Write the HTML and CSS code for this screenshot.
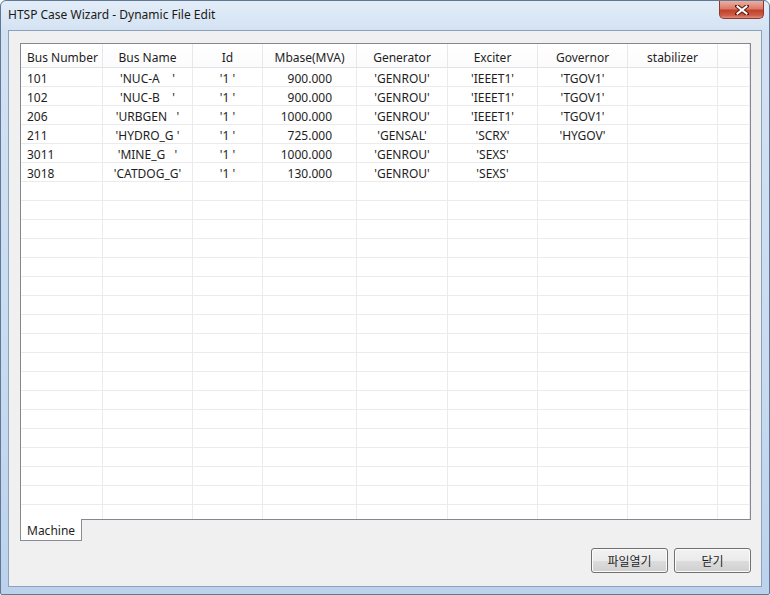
FILE: index.html
```html
<!DOCTYPE html>
<html lang="ko">
<head>
<meta charset="utf-8">
<title>HTSP Case Wizard - Dynamic File Edit</title>
<link rel="stylesheet" href="styles.css">
</head>
<body>
<div class="window">
  <div class="titlebar">
    <span class="title">HTSP Case Wizard - Dynamic File Edit</span>
    <div class="close-btn"><svg width="14" height="10" viewBox="0 0 14 10"><path d="M2 1 L12 9 M12 1 L2 9" stroke="#5a1a10" stroke-width="4" stroke-linecap="square"/><path d="M2.5 1.5 L11.5 8.5 M11.5 1.5 L2.5 8.5" stroke="#ffffff" stroke-width="2" stroke-linecap="square"/></svg></div>
  </div>
  <div class="client">
    <div class="gridbox">
      <div class="row header">
        <div class="c left">Bus Number</div>
        <div class="c">Bus Name</div>
        <div class="c">Id</div>
        <div class="c">Mbase(MVA)</div>
        <div class="c">Generator</div>
        <div class="c">Exciter</div>
        <div class="c">Governor</div>
        <div class="c">stabilizer</div>
        <div class="c"></div>
      </div>
      <div class="row"><div class="c left">101</div><div class="c">'NUC-A    '</div><div class="c">'1 '</div><div class="c right">900.000</div><div class="c">'GENROU'</div><div class="c">'IEEET1'</div><div class="c">'TGOV1'</div><div class="c"></div><div class="c"></div></div>
      <div class="row"><div class="c left">102</div><div class="c">'NUC-B    '</div><div class="c">'1 '</div><div class="c right">900.000</div><div class="c">'GENROU'</div><div class="c">'IEEET1'</div><div class="c">'TGOV1'</div><div class="c"></div><div class="c"></div></div>
      <div class="row"><div class="c left">206</div><div class="c">'URBGEN   '</div><div class="c">'1 '</div><div class="c right">1000.000</div><div class="c">'GENROU'</div><div class="c">'IEEET1'</div><div class="c">'TGOV1'</div><div class="c"></div><div class="c"></div></div>
      <div class="row"><div class="c left">211</div><div class="c">'HYDRO_G '</div><div class="c">'1 '</div><div class="c right">725.000</div><div class="c">'GENSAL'</div><div class="c">'SCRX'</div><div class="c">'HYGOV'</div><div class="c"></div><div class="c"></div></div>
      <div class="row"><div class="c left">3011</div><div class="c">'MINE_G   '</div><div class="c">'1 '</div><div class="c right">1000.000</div><div class="c">'GENROU'</div><div class="c">'SEXS'</div><div class="c"></div><div class="c"></div><div class="c"></div></div>
      <div class="row"><div class="c left">3018</div><div class="c">'CATDOG_G'</div><div class="c">'1 '</div><div class="c right">130.000</div><div class="c">'GENROU'</div><div class="c">'SEXS'</div><div class="c"></div><div class="c"></div><div class="c"></div></div>
      <div class="row"><div class="c"></div><div class="c"></div><div class="c"></div><div class="c"></div><div class="c"></div><div class="c"></div><div class="c"></div><div class="c"></div><div class="c"></div></div>
      <div class="row"><div class="c"></div><div class="c"></div><div class="c"></div><div class="c"></div><div class="c"></div><div class="c"></div><div class="c"></div><div class="c"></div><div class="c"></div></div>
      <div class="row"><div class="c"></div><div class="c"></div><div class="c"></div><div class="c"></div><div class="c"></div><div class="c"></div><div class="c"></div><div class="c"></div><div class="c"></div></div>
      <div class="row"><div class="c"></div><div class="c"></div><div class="c"></div><div class="c"></div><div class="c"></div><div class="c"></div><div class="c"></div><div class="c"></div><div class="c"></div></div>
      <div class="row"><div class="c"></div><div class="c"></div><div class="c"></div><div class="c"></div><div class="c"></div><div class="c"></div><div class="c"></div><div class="c"></div><div class="c"></div></div>
      <div class="row"><div class="c"></div><div class="c"></div><div class="c"></div><div class="c"></div><div class="c"></div><div class="c"></div><div class="c"></div><div class="c"></div><div class="c"></div></div>
      <div class="row"><div class="c"></div><div class="c"></div><div class="c"></div><div class="c"></div><div class="c"></div><div class="c"></div><div class="c"></div><div class="c"></div><div class="c"></div></div>
      <div class="row"><div class="c"></div><div class="c"></div><div class="c"></div><div class="c"></div><div class="c"></div><div class="c"></div><div class="c"></div><div class="c"></div><div class="c"></div></div>
      <div class="row"><div class="c"></div><div class="c"></div><div class="c"></div><div class="c"></div><div class="c"></div><div class="c"></div><div class="c"></div><div class="c"></div><div class="c"></div></div>
      <div class="row"><div class="c"></div><div class="c"></div><div class="c"></div><div class="c"></div><div class="c"></div><div class="c"></div><div class="c"></div><div class="c"></div><div class="c"></div></div>
      <div class="row"><div class="c"></div><div class="c"></div><div class="c"></div><div class="c"></div><div class="c"></div><div class="c"></div><div class="c"></div><div class="c"></div><div class="c"></div></div>
      <div class="row"><div class="c"></div><div class="c"></div><div class="c"></div><div class="c"></div><div class="c"></div><div class="c"></div><div class="c"></div><div class="c"></div><div class="c"></div></div>
      <div class="row"><div class="c"></div><div class="c"></div><div class="c"></div><div class="c"></div><div class="c"></div><div class="c"></div><div class="c"></div><div class="c"></div><div class="c"></div></div>
      <div class="row"><div class="c"></div><div class="c"></div><div class="c"></div><div class="c"></div><div class="c"></div><div class="c"></div><div class="c"></div><div class="c"></div><div class="c"></div></div>
      <div class="row"><div class="c"></div><div class="c"></div><div class="c"></div><div class="c"></div><div class="c"></div><div class="c"></div><div class="c"></div><div class="c"></div><div class="c"></div></div>
      <div class="row"><div class="c"></div><div class="c"></div><div class="c"></div><div class="c"></div><div class="c"></div><div class="c"></div><div class="c"></div><div class="c"></div><div class="c"></div></div>
      <div class="row"><div class="c"></div><div class="c"></div><div class="c"></div><div class="c"></div><div class="c"></div><div class="c"></div><div class="c"></div><div class="c"></div><div class="c"></div></div>
      <div class="row"><div class="c"></div><div class="c"></div><div class="c"></div><div class="c"></div><div class="c"></div><div class="c"></div><div class="c"></div><div class="c"></div><div class="c"></div></div>
      <div class="row"><div class="c"></div><div class="c"></div><div class="c"></div><div class="c"></div><div class="c"></div><div class="c"></div><div class="c"></div><div class="c"></div><div class="c"></div></div>
    </div>
    <div class="tabs"><div class="tab">Machine</div></div>
    <div class="actions">
      <button class="btn">파일열기</button>
      <button class="btn">닫기</button>
    </div>
  </div>
</div>
</body>
</html>
```
FILE: styles.css
```css
html, body {
  margin: 0;
  padding: 0;
  background: #ffffff;
}
body {
  font-family: "Noto Sans", "Noto Sans CJK KR", sans-serif;
  font-size: 12px;
  color: #1e1e1e;
}
.window {
  width: 770px;
  height: 595px;
  box-sizing: border-box;
  display: flex;
  flex-direction: column;
  background: linear-gradient(180deg, #e3edf8 0%, #d3e2f3 30px, #c8dbf0 60%, #bcd2ec 100%);
  border: 1px solid #5f7896;
  border-radius: 6px 6px 2px 2px;
  overflow: hidden;
}
.titlebar {
  height: 29px;
  flex: none;
  display: flex;
  align-items: center;
  justify-content: space-between;
  padding-left: 7px;
}
.title {
  color: #1a1a1a;
  font-size: 12px;
  margin-top: -2px;
}
.close-btn {
  align-self: flex-start;
  width: 45px;
  height: 18px;
  margin-right: 5px;
  box-sizing: border-box;
  border: 1px solid #8d3a2c;
  border-top: none;
  border-radius: 0 0 5px 5px;
  background: linear-gradient(180deg, #eab0a3 0%, #db7a68 45%, #c2402b 55%, #cf5e47 85%, #e0907e 100%);
  display: flex;
  align-items: center;
  justify-content: center;
}
.client {
  flex: 1;
  margin: 0 7px 7px 7px;
  border: 1px solid #8ba2bd;
  background: #f0f0f0;
  display: flex;
  flex-direction: column;
  padding: 12px 10px 13px 11px;
  min-height: 0;
}
.gridbox {
  height: 477px;
  flex: none;
  box-sizing: border-box;
  border: 1px solid #828790;
  background: #ffffff;
  overflow: hidden;
}
.row {
  display: grid;
  grid-template-columns: 82px 90px 70px 94px 91px 90px 90px 90px 1fr;
  height: 19px;
}
.row.header {
  height: 24px;
  background: linear-gradient(180deg, #ffffff 0%, #fbfbfc 100%);
}
.c {
  box-sizing: border-box;
  border-right: 1px solid #ebebeb;
  border-bottom: 1px solid #ebebeb;
  white-space: pre;
  text-align: center;
  line-height: 18px;
  padding-top: 2px;
  overflow: hidden;
}
.header .c {
  line-height: 23px;
  padding-top: 2px;
  border-right-color: #e6e8eb;
  border-bottom-color: #dfe2e6;
}
.c.left {
  text-align: left;
  padding-left: 6px;
}
.c.right {
  text-align: right;
  padding-right: 24px;
}
.tabs {
  display: flex;
  margin-top: -1px;
}
.tab {
  height: 22px;
  box-sizing: border-box;
  padding: 2px 6px 0;
  background: #ffffff;
  border: 1px solid #898c95;
  border-top: none;
  line-height: 19px;
}
.actions {
  margin-top: auto;
  display: flex;
  justify-content: flex-end;
  gap: 6px;
}
.btn {
  width: 77px;
  height: 25px;
  box-sizing: border-box;
  border: 1px solid #707070;
  border-radius: 3px;
  background: linear-gradient(180deg, #f2f2f2 0%, #ebebeb 50%, #dddddd 51%, #cfcfcf 100%);
  font-family: "Noto Sans CJK KR", "Noto Sans", sans-serif;
  font-size: 12px;
  color: #1e1e1e;
  padding: 0;
  box-shadow: inset 0 0 0 1px #fcfcfc;
}
```
